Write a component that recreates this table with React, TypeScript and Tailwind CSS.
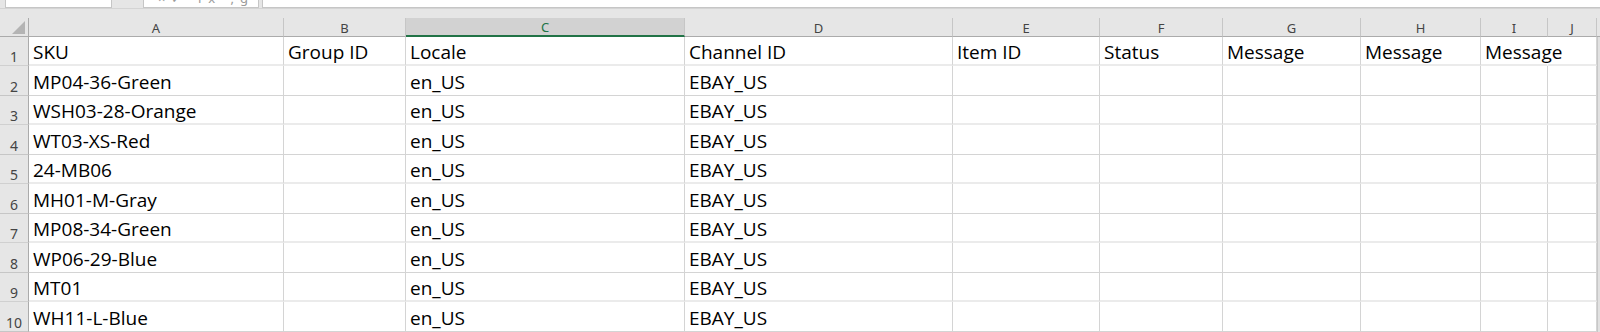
import React from "react";

type Col = { key: string; width: string };

const columns: Col[] = [
  { key: "A", width: "w-[255px]" },
  { key: "B", width: "w-[122px]" },
  { key: "C", width: "w-[279px]" },
  { key: "D", width: "w-[268px]" },
  { key: "E", width: "w-[147px]" },
  { key: "F", width: "w-[123px]" },
  { key: "G", width: "w-[138px]" },
  { key: "H", width: "w-[120px]" },
  { key: "I", width: "w-[67px]" },
  { key: "J", width: "w-[49px]" },
];

const header = ["SKU", "Group ID", "Locale", "Channel ID", "Item ID", "Status", "Message", "Message", "Message", ""];

const skus = [
  "MP04-36-Green",
  "WSH03-28-Orange",
  "WT03-XS-Red",
  "24-MB06",
  "MH01-M-Gray",
  "MP08-34-Green",
  "WP06-29-Blue",
  "MT01",
  "WH11-L-Blue",
];

const rows: string[][] = [
  header,
  ...skus.map((sku) => [sku, "", "en_US", "EBAY_US", "", "", "", "", "", ""]),
];

const cellFont = { fontFamily: '"Open Sans", "Noto Sans", sans-serif' };
const uiFont = { fontFamily: '"Noto Sans", "Open Sans", sans-serif' };

function FormulaBar() {
  return (
    <div className="relative flex h-[9px] border-b border-[#d4d4d4] bg-[#e6e6e6]">
      <div className="ml-[5px] h-[8px] w-[107px] border-x border-b border-[#c6c6c6] bg-white" />
      <div className="ml-[31px] h-[8px] w-[116px] overflow-hidden border-x border-b border-[#c6c6c6] bg-white">
        <div className="-mt-[9px] pl-[14px] text-[13px] leading-[14px] tracking-[6px] text-[#9a9a9a]" style={uiFont}>
          ×✓ fx ,g
        </div>
      </div>
      <div className="ml-[3px] h-[8px] flex-1 border-l border-b border-[#c6c6c6] bg-white" />
    </div>
  );
}

function HeaderRow() {
  return (
    <div className="flex h-[19px] bg-[#e6e6e6]" style={uiFont}>
      <div className="relative w-[29px] shrink-0 border-r border-b border-[#ababab]">
        <div className="absolute left-[12px] top-[3px] h-[13px] w-[13px] bg-[#b4b4b4] [clip-path:polygon(100%_0,100%_100%,0_100%)]" />
      </div>
      {columns.map((c) => {
        const selected = c.key === "C";
        return (
          <div
            key={c.key}
            className={`${c.width} flex shrink-0 items-center justify-center border-r text-[13px] leading-none ${
              selected
                ? "border-b-2 border-r-[#c6c6c6] border-b-[#217346] bg-[#d2d2d2] text-[#217346]"
                : "border-b border-r-[#c6c6c6] border-b-[#ababab] text-[#444444]"
            }`}
          >
            <span className="pt-[2px]">{c.key}</span>
          </div>
        );
      })}
      <div className="w-[3px] shrink-0 border-b border-[#ababab] bg-[#e6e6e6]" />
    </div>
  );
}

function DataRow({ index, cells }: { index: number; cells: string[] }) {
  const odd = index % 2 === 1;
  const height = odd ? "h-[29px]" : "h-[30px]";
  const line = odd ? "border-b-2 border-b-[#ebebeb] pb-0" : "border-b border-b-[#d4d4d4] pb-[1px]";
  const overflowRow = cells[8] !== "";
  return (
    <div className={`flex ${height}`}>
      <div
        className={`flex w-[29px] shrink-0 items-end justify-center border-r border-r-[#ababab] bg-[#e6e6e6] pb-[1px] text-[14px] leading-none text-[#444444] ${
          odd ? "border-b border-b-[#d0d0d0]" : "border-b border-b-[#c6c6c6]"
        }`}
        style={uiFont}
      >
        {index}
      </div>
      {columns.map((c, i) => {
        const hideRight = overflowRow && c.key === "I";
        return (
          <div
            key={c.key}
            className={`${c.width} relative flex shrink-0 items-end bg-white pl-[4px] ${line} ${
              hideRight ? "border-r border-r-white" : "border-r border-r-[#d4d4d4]"
            }`}
          >
            <span
              className={`whitespace-nowrap text-[19px] leading-[24px] text-black ${hideRight ? "relative z-10" : ""}`}
              style={cellFont}
            >
              {cells[i]}
            </span>
          </div>
        );
      })}
      <div className="w-[3px] shrink-0 border-l border-[#c8c8c8] bg-[#e1e1e1]" />
    </div>
  );
}

export default function App() {
  return (
    <div className="h-[332px] w-[1600px] overflow-hidden bg-[#e6e6e6]">
      <FormulaBar />
      <div className="h-[9px] bg-[#e6e6e6]" />
      <HeaderRow />
      {rows.map((r, i) => (
        <DataRow key={i} index={i + 1} cells={r} />
      ))}
    </div>
  );
}
